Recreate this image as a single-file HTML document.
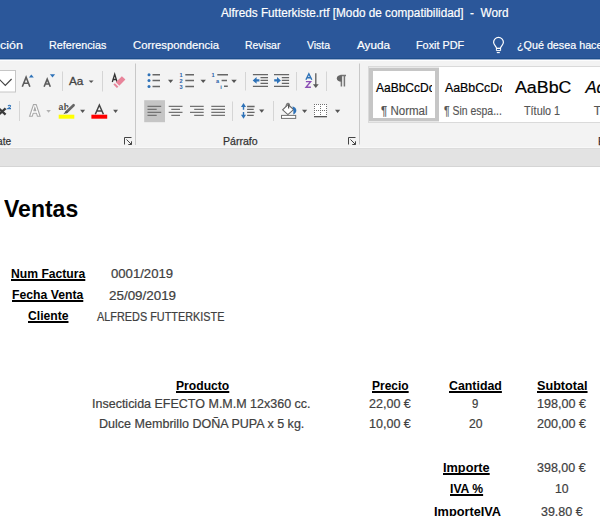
<!DOCTYPE html>
<html><head><meta charset="utf-8">
<style>
html,body{margin:0;padding:0;}
body{width:600px;height:516px;overflow:hidden;position:relative;background:#fff;font-family:"Liberation Sans",sans-serif;}
.t{position:absolute;white-space:pre;line-height:normal;transform-origin:0 0;}
.r{position:absolute;}
</style></head><body>
<div class="r" style="left:0;top:0;width:600px;height:58px;background:#2b579a"></div>
<div class="r" style="left:0;top:58px;width:600px;height:1px;background:#1e4e8c"></div>
<div class="r" style="left:0;top:59px;width:600px;height:1px;background:#9db1d0"></div>
<div class="r" style="left:0;top:60px;width:600px;height:88px;background:#f3f3f3"></div>
<div class="r" style="left:0;top:60px;width:600px;height:1px;background:#fdfdfd"></div>
<div class="r" style="left:0;top:147px;width:600px;height:1px;background:#f8f8f8"></div>
<div class="r" style="left:0;top:148px;width:600px;height:1px;background:#dcdcdc"></div>
<div class="r" style="left:0;top:149px;width:600px;height:17px;background:#e3e3e3"></div>
<div class="r" style="left:0;top:166px;width:600px;height:1px;background:#d5d5d5"></div>
<div class="r" style="left:368px;top:66px;width:240px;height:55px;background:#fff;border:1px solid #dadada"></div>
<div class="r" style="left:369px;top:67px;width:70px;height:1px;background:#e8e8e8"></div>
<div class="r" style="left:369px;top:121px;width:70px;height:1px;background:#e8e8e8"></div>
<div class="r" style="left:369px;top:68px;width:62px;height:47px;border:solid #c6c6c6;border-width:3px 4px;background:#fff"></div>
<svg class="r" style="left:0;top:0" width="600" height="166" viewBox="0 0 600 166">
<!-- font size box -->
<rect x="-5" y="70.5" width="20.5" height="21.5" fill="#fff" stroke="#c6c6c6" stroke-width="1"/>
<polyline points="-1,79 5.3,85.3 11.6,79" fill="none" stroke="#444" stroke-width="1.2"/>
<!-- separators -->
<g stroke="#d5d5d5" stroke-width="1">
<line x1="62.5" y1="71.5" x2="62.5" y2="91"/>
<line x1="102.5" y1="71" x2="102.5" y2="91.5"/>
<line x1="19.5" y1="101" x2="19.5" y2="121"/>
<line x1="245.5" y1="72" x2="245.5" y2="90.5"/>
<line x1="296.5" y1="72" x2="296.5" y2="90.5"/>
<line x1="326.5" y1="71.5" x2="326.5" y2="91"/>
<line x1="232.5" y1="101.5" x2="232.5" y2="121"/>
<line x1="273.5" y1="101" x2="273.5" y2="121"/>
</g>
<g stroke="#c8c8c8" stroke-width="1">
<line x1="135.5" y1="63.5" x2="135.5" y2="145"/>
<line x1="359.5" y1="63.5" x2="359.5" y2="144.5"/>
</g>
<!-- grow / shrink font -->
<g fill="none" stroke="#5c5c5c" stroke-width="1.6" stroke-linejoin="miter">
<path d="M22.3,86.8 L26.1,77.2 L29.9,86.8 M23.8,83.2 H28.4"/>
<path d="M44.1,86.8 L47.2,79.2 L50.3,86.8 M45.3,84 H49.1"/>
</g>
<g fill="#2e72b8">
<path d="M28.9,77.4 L31.3,74.4 L33.8,77.4Z"/>
<path d="M49.9,74.2 L55.1,74.2 L52.5,77.4Z"/>
</g>
<!-- Aa dropdown -->
<g fill="#555">
<path d="M88.7,80.6 H93.6 L91.15,83.1Z"/>
<path d="M80.1,109.7 H85.1 L82.6,112.9Z"/>
<path d="M113.1,109.7 H118 L115.55,112.9Z"/>
<path d="M168,79.8 H173.2 L170.6,83.1Z"/>
<path d="M200.5,79.8 H205.9 L203.2,83.1Z"/>
<path d="M231.3,79.8 H236.75 L234,83.1Z"/>
<path d="M259.1,109.6 H264.3 L261.7,112.8Z"/>
<path d="M302,109.8 H307.2 L304.6,113Z"/>
<path d="M335,109.8 H340.2 L337.6,113Z"/>
</g>
<path d="M46.3,110 H50.9 L48.6,112.7Z" fill="#b0b0b0"/>
<!-- clear formatting -->
<path d="M112.3,82 L114.7,74.3 L117.1,82 M113.2,79.5 H116.3" fill="none" stroke="#333" stroke-width="1.3"/>
<path d="M121.9,76.2 L125.4,79.6 L119.3,85.8 L115.8,82.3Z" fill="#e8849a"/>
<path d="M113.4,84.6 L114.9,83.2 L118.4,86.7 L116.9,88.1Z" fill="#e8849a"/>
<!-- superscript x2 -->
<path d="M-1.2,108.4 L5.6,114.6 M5.6,108.4 L-1.2,114.6" stroke="#3a3a3a" stroke-width="2.3"/>
<path d="M8,106.2 Q9.4,104.6 10.6,105.9 Q10.8,107 8,108.6 H11" fill="none" stroke="#2e72b8" stroke-width="1.1"/>
<!-- outline A -->
<path d="M29.6,116.2 L33.5,104.6 H36.2 L40.1,116.2 H37.4 L36.5,113.2 H33.2 L32.3,116.2Z M33.9,110.8 H35.8 L34.85,107.6Z" fill="#fff" stroke="#a8a8a8" stroke-width="1.1"/>
<!-- highlighter -->
<text x="58.6" y="109.8" font-family="Liberation Sans" font-size="8.6" font-weight="700" fill="#4a4a4a" letter-spacing="0.3">ab</text>
<path d="M73.6,105.2 L66.6,112" stroke="#f3f3f3" stroke-width="4.6"/>
<path d="M73.6,105.2 L66.6,112" stroke="#666" stroke-width="2.6" stroke-linecap="round"/>
<path d="M66.2,110.6 L68,112.4 L63.4,114.2Z" fill="#555"/>
<rect x="58.7" y="114.7" width="15.6" height="4" fill="#ffff00"/>
<!-- font color -->
<path d="M95.3,114.2 L99.35,105 L103.4,114.2 M96.8,111 H101.9" fill="none" stroke="#444" stroke-width="1.5"/>
<rect x="91.4" y="114.7" width="15.8" height="4" fill="#ff0000"/>
<!-- bullets -->
<g fill="#2e72b8">
<circle cx="149" cy="74.7" r="1.5"/><circle cx="149" cy="80.6" r="1.5"/><circle cx="149" cy="86.4" r="1.5"/>
</g>
<g stroke="#666" stroke-width="1.5">
<path d="M152.5,74.7 H160 M152.5,80.6 H160 M152.5,86.4 H160"/>
<path d="M185.3,74.7 H194 M185.3,80.6 H194 M185.3,86.4 H194"/>
<path d="M217.3,74.7 H228 M221.6,80.6 H227 M224,86.3 H227.8"/>
</g>
<g fill="#2760a8" font-family="Liberation Sans" font-weight="700" font-size="5.6">
<text x="179.6" y="77">1</text><text x="179.6" y="82.9">2</text><text x="179.6" y="88.8">3</text>
<text x="211.6" y="77">1</text><text x="216" y="82.9">a</text><text x="220.3" y="88.8">i</text>
</g>
<!-- indent -->
<g stroke="#666" stroke-width="1.3">
<path d="M252.9,74.65 H268 M260.5,77.55 H268 M260.5,80.4 H268 M260.5,83.4 H268 M252.9,86.4 H268"/>
<path d="M274,74.65 H289.1 M281.8,77.55 H289.1 M281.8,80.4 H289.1 M281.8,83.4 H289.1 M274,86.4 H289.1"/>
</g>
<g fill="#2e72b8">
<path d="M252.7,80.4 L256.6,77 V79.2 H259.4 V81.6 H256.6 V83.8Z"/>
<path d="M280.9,80.4 L277,77 V79.2 H274.2 V81.6 H277 V83.8Z"/>
</g>
<!-- sort -->
<path d="M305.9,79.8 L308.85,73.8 L311.8,79.8 M306.9,77.8 H310.8" fill="none" stroke="#2e72b8" stroke-width="1.4"/>
<path d="M305.9,81.6 H310.6 L306,87.3 H310.9" fill="none" stroke="#8b4fb5" stroke-width="1.4"/>
<path d="M315.8,73.2 V85" stroke="#5a5a5a" stroke-width="1.3"/>
<path d="M312.9,84.2 H318.7 L315.8,87.9Z" fill="#5a5a5a"/>
<!-- pilcrow -->
<path d="M340.5,75.6 H346 M341.4,75.3 V86.6 M344.4,75.3 V86.6" stroke="#767676" stroke-width="1.5"/>
<path d="M341.6,75.1 C338.2,75.1 336.8,76.6 336.8,78.5 C336.8,80.4 338.4,81.8 341.6,81.8Z" fill="#666"/>
<!-- alignment -->
<rect x="144.2" y="100.2" width="20.8" height="22" fill="#c5c5c5"/>
<g stroke="#737373" stroke-width="1.25">
<path d="M147.5,106.3 H161.2 M147.5,109.3 H156.7 M147.5,112.3 H161.2 M147.5,115.3 H156.7"/>
<path d="M168.7,106.3 H182.5 M171.3,109.3 H180 M168.7,112.3 H182.5 M171.3,115.3 H180"/>
<path d="M190,106.3 H203.7 M194.2,109.3 H203.7 M190,112.3 H203.7 M194.2,115.3 H203.7"/>
<path d="M211.3,106.3 H225 M211.3,109.3 H225 M211.3,112.3 H225 M211.3,115.3 H225"/>
</g>
<!-- line spacing -->
<g fill="#2e72b8">
<path d="M243.5,103 L246,107 H244.2 V109.8 H242.8 V107 H241Z"/>
<path d="M243.5,118.8 L246,114.8 H244.2 V112 H242.8 V114.8 H241Z"/>
</g>
<path d="M247.1,106.5 H254.6 M247.1,109.4 H253.7 M247.1,112.4 H254.6 M247.1,115.4 H253.7" stroke="#666" stroke-width="1.3"/>
<!-- shading -->
<path d="M282.6,109.8 L288,104.5 L293.6,109.6 L287.9,114.6 Z" fill="#fff" stroke="#666" stroke-width="1.1"/>
<path d="M285.9,106.9 Q286.4,103.2 288.1,103.3 Q289.7,103.5 289.5,106.3" fill="none" stroke="#777" stroke-width="1.1"/>
<path d="M288.6,104.6 V108.6" stroke="#555" stroke-width="1.2"/>
<path d="M292.4,106.6 C295.6,107.1 296.9,109.5 296.2,111.6 C295.7,113 294.8,113.9 293.3,114.6 L293.4,110.3Z" fill="#2e72b8"/>
<rect x="281.5" y="115.4" width="14.2" height="3" fill="#fff" stroke="#707070" stroke-width="1"/>
<!-- borders -->
<rect x="314" y="104" width="13" height="12" fill="#fff"/>
<g fill="#707070"><rect x="314" y="104" width="1" height="1"/><rect x="314" y="106" width="1" height="1"/><rect x="314" y="108" width="1" height="1"/><rect x="314" y="110" width="1" height="1"/><rect x="314" y="112" width="1" height="1"/><rect x="314" y="114" width="1" height="1"/><rect x="316" y="104" width="1" height="1"/><rect x="316" y="110" width="1" height="1"/><rect x="318" y="104" width="1" height="1"/><rect x="318" y="110" width="1" height="1"/><rect x="320" y="104" width="1" height="1"/><rect x="320" y="106" width="1" height="1"/><rect x="320" y="108" width="1" height="1"/><rect x="320" y="110" width="1" height="1"/><rect x="320" y="112" width="1" height="1"/><rect x="320" y="114" width="1" height="1"/><rect x="322" y="104" width="1" height="1"/><rect x="322" y="110" width="1" height="1"/><rect x="324" y="104" width="1" height="1"/><rect x="324" y="110" width="1" height="1"/><rect x="326" y="104" width="1" height="1"/><rect x="326" y="106" width="1" height="1"/><rect x="326" y="108" width="1" height="1"/><rect x="326" y="110" width="1" height="1"/><rect x="326" y="112" width="1" height="1"/><rect x="326" y="114" width="1" height="1"/></g>
<rect x="314" y="116" width="13" height="1.3" fill="#555"/>
<!-- lightbulb -->
<path d="M496.6,48.3 C496.3,46.3 493.6,45 493.6,42.3 A4.9,4.9 0 1 1 503.4,42.3 C503.4,45 500.7,46.3 500.4,48.3 Z" fill="none" stroke="#fff" stroke-width="1.2"/>
<path d="M496.4,48.4 H500.6 V50.6 H496.4Z" fill="none" stroke="#fff" stroke-width="1"/>
<path d="M496.8,52.6 H499.8" stroke="#fff" stroke-width="1.1"/>
<!-- launchers -->
<g fill="none" stroke="#444" stroke-width="1">
<path d="M124.5,144.5 V137.5 H131.5"/><path d="M126.5,139.5 L131.5,144.5 M128.3,144.5 H131.5 V141.3"/>
<path d="M348.5,144.5 V137.5 H355.5"/><path d="M350.5,139.5 L355.5,144.5 M352.3,144.5 H355.5 V141.3"/>
</g>
<!-- style gallery -->
</svg>

<div class="t" style="left:221.20px;top:6.24px;font-size:12px;color:#ffffff;transform:scaleX(0.9803);-webkit-text-stroke:0.2px #fff;">Alfreds Futterkiste.rtf [Modo de compatibilidad]  -  Word</div><div class="t" style="left:-0.30px;top:38.41px;font-size:11.7px;color:#ffffff;transform:scaleX(1.0649);-webkit-text-stroke:0.2px #fff;">ción</div><div class="t" style="left:48.50px;top:38.41px;font-size:11.7px;color:#ffffff;transform:scaleX(0.9197);-webkit-text-stroke:0.2px #fff;">Referencias</div><div class="t" style="left:132.50px;top:38.41px;font-size:11.7px;color:#ffffff;transform:scaleX(0.9664);-webkit-text-stroke:0.2px #fff;">Correspondencia</div><div class="t" style="left:245.00px;top:38.41px;font-size:11.7px;color:#ffffff;transform:scaleX(0.8937);-webkit-text-stroke:0.2px #fff;">Revisar</div><div class="t" style="left:307.00px;top:38.41px;font-size:11.7px;color:#ffffff;transform:scaleX(0.8945);-webkit-text-stroke:0.2px #fff;">Vista</div><div class="t" style="left:356.50px;top:38.41px;font-size:11.7px;color:#ffffff;transform:scaleX(1.0022);-webkit-text-stroke:0.2px #fff;">Ayuda</div><div class="t" style="left:416.00px;top:38.41px;font-size:11.7px;color:#ffffff;transform:scaleX(0.9265);-webkit-text-stroke:0.2px #fff;">Foxit PDF</div><div class="t" style="left:517.00px;top:38.41px;font-size:11.7px;color:#ffffff;transform:scaleX(0.9200);-webkit-text-stroke:0.2px #fff;">¿Qué desea hacer?</div><div class="t" style="left:-2.96px;top:134.84px;font-size:11px;color:#333;transform:scaleX(0.9200);-webkit-text-stroke:0.25px #333;">ate</div><div class="t" style="left:222.50px;top:134.84px;font-size:11px;color:#333;transform:scaleX(0.9595);-webkit-text-stroke:0.25px #333;">Párrafo</div><div class="t" style="left:598.00px;top:134.84px;font-size:11px;color:#333;-webkit-text-stroke:0.25px #333;">E</div><div class="r" style="left:373px;top:71px;width:59px;height:29px;overflow:hidden"><div class="t" style="left:2.80px;top:10.36px;font-size:12.2px;color:#000;transform:scaleX(0.9850);-webkit-text-stroke:0.2px #000;">AaBbCcDc</div></div><div class="t" style="left:381.00px;top:103.54px;font-size:12px;color:#555;transform:scaleX(0.9605);-webkit-text-stroke:0.15px #555;">¶ Normal</div><div class="r" style="left:440px;top:71px;width:61.60000000000002px;height:29px;overflow:hidden"><div class="t" style="left:5.20px;top:10.36px;font-size:12.2px;color:#000;transform:scaleX(1.0130);-webkit-text-stroke:0.2px #000;">AaBbCcDc</div></div><div class="t" style="left:444.40px;top:103.54px;font-size:12px;color:#555;transform:scaleX(0.8708);-webkit-text-stroke:0.15px #555;">¶ Sin espa...</div><div class="t" style="left:515.00px;top:78.10px;font-size:16.8px;color:#000;transform:scaleX(1.0603);-webkit-text-stroke:0.2px #000;">AaBbC</div><div class="t" style="left:524.00px;top:103.54px;font-size:12px;color:#555;transform:scaleX(0.9022);-webkit-text-stroke:0.15px #555;">Título 1</div><div class="t" style="left:585.40px;top:78.10px;font-size:16.8px;color:#000;font-style:italic;-webkit-text-stroke:0.2px #000;">Ac</div><div class="t" style="left:593.75px;top:103.54px;font-size:12px;color:#555;-webkit-text-stroke:0.15px #555;">T</div><div class="t" style="left:69.20px;top:73.92px;font-size:11.8px;color:#444;transform:scaleX(0.9954);-webkit-text-stroke:0.3px #444;">Aa</div><div class="t" style="left:4.20px;top:195.80px;font-size:23.2px;color:#000;font-weight:700;transform:scaleX(0.9924);">Ventas</div><div class="t" style="left:11.00px;top:267.04px;font-size:12px;color:#000;font-weight:700;transform:scaleX(1.0126);text-decoration:underline;text-decoration-thickness:1.5px;text-underline-offset:0.8px;text-decoration-skip-ink:none;">Num Factura</div><div class="t" style="left:12.00px;top:288.34px;font-size:12px;color:#000;font-weight:700;transform:scaleX(1.0177);text-decoration:underline;text-decoration-thickness:1.5px;text-underline-offset:0.8px;text-decoration-skip-ink:none;">Fecha Venta</div><div class="t" style="left:27.60px;top:309.24px;font-size:12px;color:#000;font-weight:700;transform:scaleX(1.0116);text-decoration:underline;text-decoration-thickness:1.5px;text-underline-offset:0.8px;text-decoration-skip-ink:none;">Cliente</div><div class="t" style="left:111.25px;top:267.23px;font-size:11.9px;color:#404040;transform:scaleX(1.1043);-webkit-text-stroke:0.2px #404040;">0001/2019</div><div class="t" style="left:108.75px;top:288.73px;font-size:11.9px;color:#404040;transform:scaleX(1.1269);-webkit-text-stroke:0.2px #404040;">25/09/2019</div><div class="t" style="left:97.00px;top:309.73px;font-size:11.9px;color:#404040;transform:scaleX(0.9142);-webkit-text-stroke:0.2px #404040;">ALFREDS FUTTERKISTE</div><div class="t" style="left:176.00px;top:378.83px;font-size:11.9px;color:#000;font-weight:700;transform:scaleX(1.0208);text-decoration:underline;text-decoration-thickness:1.5px;text-underline-offset:0.8px;text-decoration-skip-ink:none;">Producto</div><div class="t" style="left:372.00px;top:378.83px;font-size:11.9px;color:#000;font-weight:700;transform:scaleX(1.0086);text-decoration:underline;text-decoration-thickness:1.5px;text-underline-offset:0.8px;text-decoration-skip-ink:none;">Precio</div><div class="t" style="left:449.30px;top:378.83px;font-size:11.9px;color:#000;font-weight:700;transform:scaleX(1.0395);text-decoration:underline;text-decoration-thickness:1.5px;text-underline-offset:0.8px;text-decoration-skip-ink:none;">Cantidad</div><div class="t" style="left:536.50px;top:378.83px;font-size:11.9px;color:#000;font-weight:700;transform:scaleX(1.0624);text-decoration:underline;text-decoration-thickness:1.5px;text-underline-offset:0.8px;text-decoration-skip-ink:none;">Subtotal</div><div class="t" style="left:92.35px;top:397.23px;font-size:11.9px;color:#404040;transform:scaleX(1.0512);-webkit-text-stroke:0.2px #404040;">Insecticida EFECTO M.M.M 12x360 cc.</div><div class="t" style="left:98.60px;top:417.23px;font-size:11.9px;color:#404040;transform:scaleX(1.0546);-webkit-text-stroke:0.2px #404040;">Dulce Membrillo DOÑA PUPA x 5 kg.</div><div class="t" style="left:369.40px;top:397.23px;font-size:11.9px;color:#404040;transform:scaleX(1.0534);-webkit-text-stroke:0.2px #404040;">22,00 €</div><div class="t" style="left:369.40px;top:417.23px;font-size:11.9px;color:#404040;transform:scaleX(1.0534);-webkit-text-stroke:0.2px #404040;">10,00 €</div><div class="t" style="left:472.00px;top:397.23px;font-size:11.9px;color:#404040;transform:scaleX(0.9571);-webkit-text-stroke:0.2px #404040;">9</div><div class="t" style="left:468.80px;top:417.23px;font-size:11.9px;color:#404040;transform:scaleX(1.0211);-webkit-text-stroke:0.2px #404040;">20</div><div class="t" style="left:537.30px;top:397.23px;font-size:11.9px;color:#404040;transform:scaleX(1.0584);-webkit-text-stroke:0.2px #404040;">198,00 €</div><div class="t" style="left:537.30px;top:417.23px;font-size:11.9px;color:#404040;transform:scaleX(1.0584);-webkit-text-stroke:0.2px #404040;">200,00 €</div><div class="t" style="left:443.40px;top:460.53px;font-size:11.9px;color:#000;font-weight:700;transform:scaleX(1.0707);text-decoration:underline;text-decoration-thickness:1.5px;text-underline-offset:0.8px;text-decoration-skip-ink:none;">Importe</div><div class="t" style="left:537.00px;top:460.53px;font-size:11.9px;color:#404040;transform:scaleX(1.0499);-webkit-text-stroke:0.2px #404040;">398,00 €</div><div class="t" style="left:450.00px;top:482.13px;font-size:11.9px;color:#000;font-weight:700;transform:scaleX(1.0228);text-decoration:underline;text-decoration-thickness:1.5px;text-underline-offset:0.8px;text-decoration-skip-ink:none;">IVA %</div><div class="t" style="left:555.00px;top:482.13px;font-size:11.9px;color:#404040;transform:scaleX(1.0284);-webkit-text-stroke:0.2px #404040;">10</div><div class="t" style="left:433.50px;top:504.53px;font-size:11.9px;color:#000;font-weight:700;transform:scaleX(1.0722);text-decoration:underline;text-decoration-thickness:1.5px;text-underline-offset:0.8px;text-decoration-skip-ink:none;">ImporteIVA</div><div class="t" style="left:541.00px;top:504.53px;font-size:11.9px;color:#404040;transform:scaleX(1.0484);-webkit-text-stroke:0.2px #404040;">39,80 €</div>
</body></html>
